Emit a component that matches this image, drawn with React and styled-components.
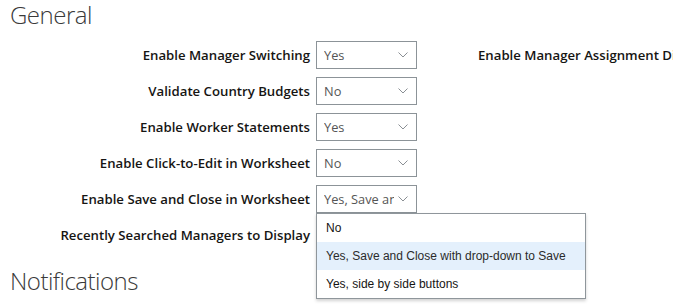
import React from "react";
import styled, { createGlobalStyle } from "styled-components";

const Global = createGlobalStyle`
  html, body { margin: 0; padding: 0; background: #fff; }
  body { overflow: hidden; font-family: "Open Sans", "Noto Sans", sans-serif; }
`;

const Page = styled.div`
  position: relative;
  width: 673px;
  height: 304px;
  overflow: hidden;
  padding-left: 10px;
  box-sizing: border-box;
`;

const Heading = styled.h2`
  margin: 0;
  font-family: "Open Sans", "Noto Sans", sans-serif;
  font-weight: 300;
  font-size: 24px;
  letter-spacing: -0.5px;
  line-height: 30px;
  color: #3a3a3a;
  height: ${(p) => p.$h}px;
  padding-top: ${(p) => p.$pt}px;
  box-sizing: border-box;
`;

const Form = styled.div`
  display: grid;
  grid-template-columns: 300px 101px auto;
  column-gap: 6px;
  row-gap: 8px;
  grid-auto-rows: 28px;
`;

const Label = styled.div`
  text-align: right;
  white-space: nowrap;
  font-family: "Open Sans", "Noto Sans", sans-serif;
  font-weight: 600;
  font-size: 13.2px;
  color: #161513;
  display: flex;
  align-items: center;
  justify-content: flex-end;
`;

const SideLabel = styled(Label)`
  justify-content: flex-start;
  padding-left: 55px;
`;

const Cell = styled.div`
  position: relative;
`;

const Select = styled.div`
  box-sizing: border-box;
  height: 28px;
  border: 1px solid #8c9398;
  background: #fff;
  display: flex;
  align-items: center;
  padding: 0 8px 0 7px;
  font-family: "Open Sans", "Noto Sans", sans-serif;
  font-size: 12.8px;
  color: #555;
  white-space: nowrap;
`;

const Value = styled.span`
  flex: 1;
  overflow: hidden;
`;

const Chevron = styled.svg`
  flex: none;
  margin-left: 4px;
`;

const Menu = styled.div`
  position: absolute;
  top: 28px;
  left: 0;
  width: 270px;
  box-sizing: border-box;
  background: #fff;
  border: 1px solid #8f969b;
  box-shadow: 0 2px 3px rgba(0, 0, 0, 0.18);
  z-index: 2;
  padding: 0;
`;

const Item = styled.div`
  height: 28px;
  display: flex;
  align-items: center;
  padding-left: 9px;
  font-family: "Liberation Sans", Arial, sans-serif;
  font-size: 12px;
  color: ${(p) => (p.$active ? "#2b2b2b" : "#161513")};
  background: ${(p) => (p.$active ? "#e4f0fc" : "#fff")};
`;

const Down = () => (
  <Chevron width="10" height="6" viewBox="0 0 10 6">
    <path d="M0.5 0.5 L5 5 L9.5 0.5" fill="none" stroke="#8a8f94" strokeWidth="1" />
  </Chevron>
);

const rows = [
  { label: "Enable Manager Switching", value: "Yes" },
  { label: "Validate Country Budgets", value: "No" },
  { label: "Enable Worker Statements", value: "Yes" },
  { label: "Enable Click-to-Edit in Worksheet", value: "No" },
  { label: "Enable Save and Close in Worksheet", value: "Yes, Save and Close with drop-down to Save", open: true },
  { label: "Recently Searched Managers to Display", value: "" },
];

const options = [
  "No",
  "Yes, Save and Close with drop-down to Save",
  "Yes, side by side buttons",
];

export default function App() {
  return (
    <Page>
      <Global />
      <Heading $h={41} $pt={0}>General</Heading>
      <Form>
        {rows.map((r, i) => (
          <React.Fragment key={r.label}>
            <Label>{r.label}</Label>
            <Cell>
              <Select>
                <Value>{r.value}</Value>
                <Down />
              </Select>
              {r.open && (
                <Menu>
                  {options.map((o) => (
                    <Item key={o} $active={o === r.value}>{o}</Item>
                  ))}
                </Menu>
              )}
            </Cell>
            {i === 0 ? <SideLabel>Enable Manager Assignment Display</SideLabel> : <span />}
          </React.Fragment>
        ))}
      </Form>
      <Heading $h={50} $pt={17}>Notifications</Heading>
    </Page>
  );
}
